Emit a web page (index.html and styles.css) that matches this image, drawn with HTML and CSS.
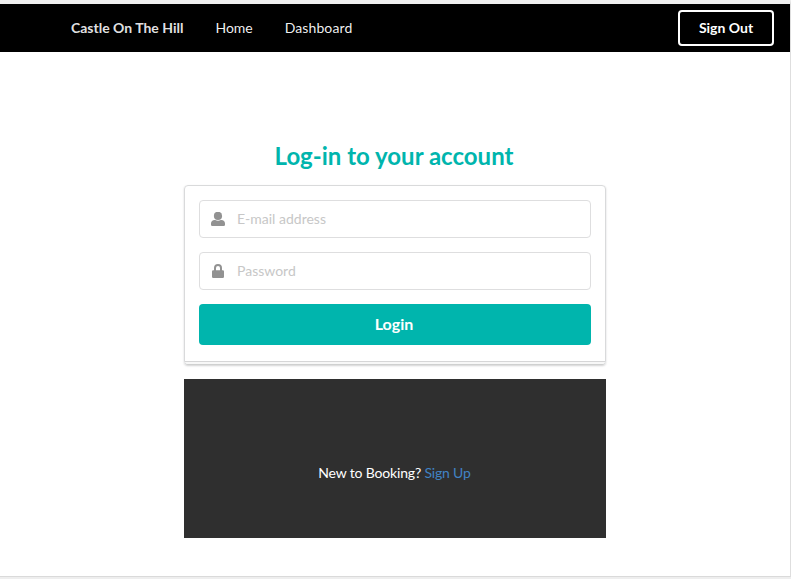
FILE: index.html
```
<!DOCTYPE html>
<html lang="en">
<head>
<meta charset="utf-8">
<title>Castle On The Hill</title>
<link rel="stylesheet" href="styles.css">
</head>
<body>
<div class="page">
  <nav class="menu">
    <a class="brand">Castle On The Hill</a>
    <a class="item">Home</a>
    <a class="item dashboard">Dashboard</a>
    <button class="sign-out">Sign Out</button>
  </nav>
  <main class="content">
    <h2 class="title">Log-in to your account</h2>
    <form class="segment">
      <label class="field">
        <svg class="icon" viewBox="0 0 14 14"><circle cx="7" cy="3.9" r="4.1"/><path d="M0 12.7V11.4C0 9.3 1.5 8 3.6 8H4.2Q7 9.3 9.8 8H10.4C12.5 8 14 9.3 14 11.4V12.7Q14 14 12.7 14H1.3Q0 14 0 12.7Z"/></svg>
        <input type="text" placeholder="E-mail address">
      </label>
      <label class="field">
        <svg class="icon" viewBox="0 0 14 14"><path d="M2.2 6.2H3V4A4 4 0 0 1 11 4V6.2H11.8Q13 6.2 13 7.5V12.7Q13 14 11.7 14H2.3Q1 14 1 12.7V7.5Q1 6.2 2.2 6.2ZM5 6.2H9V4A2 2 0 0 0 5 4Z"/></svg>
        <input type="password" placeholder="Password">
      </label>
      <button type="button" class="login">Login</button>
    </form>
    <div class="message"><p>New to Booking? <a>Sign Up</a></p></div>
  </main>
</div>
</body>
</html>
```
FILE: styles.css
```
*, *::after { box-sizing: border-box; }
body {
  margin: 0;
  height: 579px;
  overflow: hidden;
  background: #eee;
  font: 14px/20px Lato, "Liberation Sans", sans-serif;
}
.page {
  width: 791px;
  height: 577px;
  border-top: 4px solid #efefef;
  border-right: 1px solid #dedede;
  border-bottom: 1px solid #dadada;
  background: #fff;
}
.menu {
  display: flex;
  align-items: center;
  height: 48px;
  padding: 0 16px 0 71px;
  background: #000;
  color: rgba(255, 255, 255, .95);
}
.brand { margin-right: 32px; font-weight: 700; color: rgba(255, 255, 255, .9); }
.item { margin-right: 32px; }
.dashboard { letter-spacing: .1px; }
.sign-out {
  width: 96px;
  height: 36px;
  margin-left: auto;
  padding: 0;
  border: 2px solid #fff;
  border-radius: 4px;
  background: transparent;
  color: #fff;
  font: 700 14px/14px Lato, sans-serif;
}
.content { width: 422px; margin: 89px 0 0 184px; }
.title {
  margin: 0 0 14px;
  padding-right: 2px;
  color: #00b5ad;
  font-size: 24px;
  line-height: 30px;
  font-weight: 700;
  text-align: center;
}
.segment {
  position: relative;
  height: 180px;
  margin: 0 0 14px;
  padding: 14px;
  border: 1px solid #d9dadb;
  border-radius: 4px;
  box-shadow: 0 1px 2px rgba(34, 36, 38, .2);
}
.segment::after {
  content: "";
  position: absolute;
  left: 0;
  right: 0;
  bottom: -1px;
  height: 4px;
  border-top: 1px solid #d6d6d7;
  border-bottom: 1px solid #cfd0d0;
  border-radius: 0 0 3px 3px;
  background: #f7f7f7;
}
.field {
  display: flex;
  align-items: center;
  height: 38px;
  margin-bottom: 14px;
  padding: 0 12px 0 11px;
  border: 1px solid #dededf;
  border-radius: 4px;
}
.icon { flex: none; width: 14px; height: 14px; margin-right: 12px; fill: #929292; }
.field input {
  flex: 1;
  min-width: 0;
  padding: 0 0 2px;
  border: 0;
  outline: 0;
  background: transparent;
  font: 14px/17px Lato, sans-serif;
}
.field input::placeholder { color: #c7c7c7; }
.login {
  display: block;
  width: 100%;
  height: 41px;
  padding: 0 2px 2px 0;
  border: 0;
  border-radius: 4px;
  background: #00b5ad;
  color: #fff;
  font: 700 16px/16px Lato, sans-serif;
}
.message {
  display: flex;
  align-items: center;
  justify-content: center;
  height: 159px;
  padding: 29px 1px 0 0;
  background: #2f2f2f;
  color: #fff;
}
.message p { margin: 0; letter-spacing: -.17px; }
.message a { color: #4183c4; }
```
